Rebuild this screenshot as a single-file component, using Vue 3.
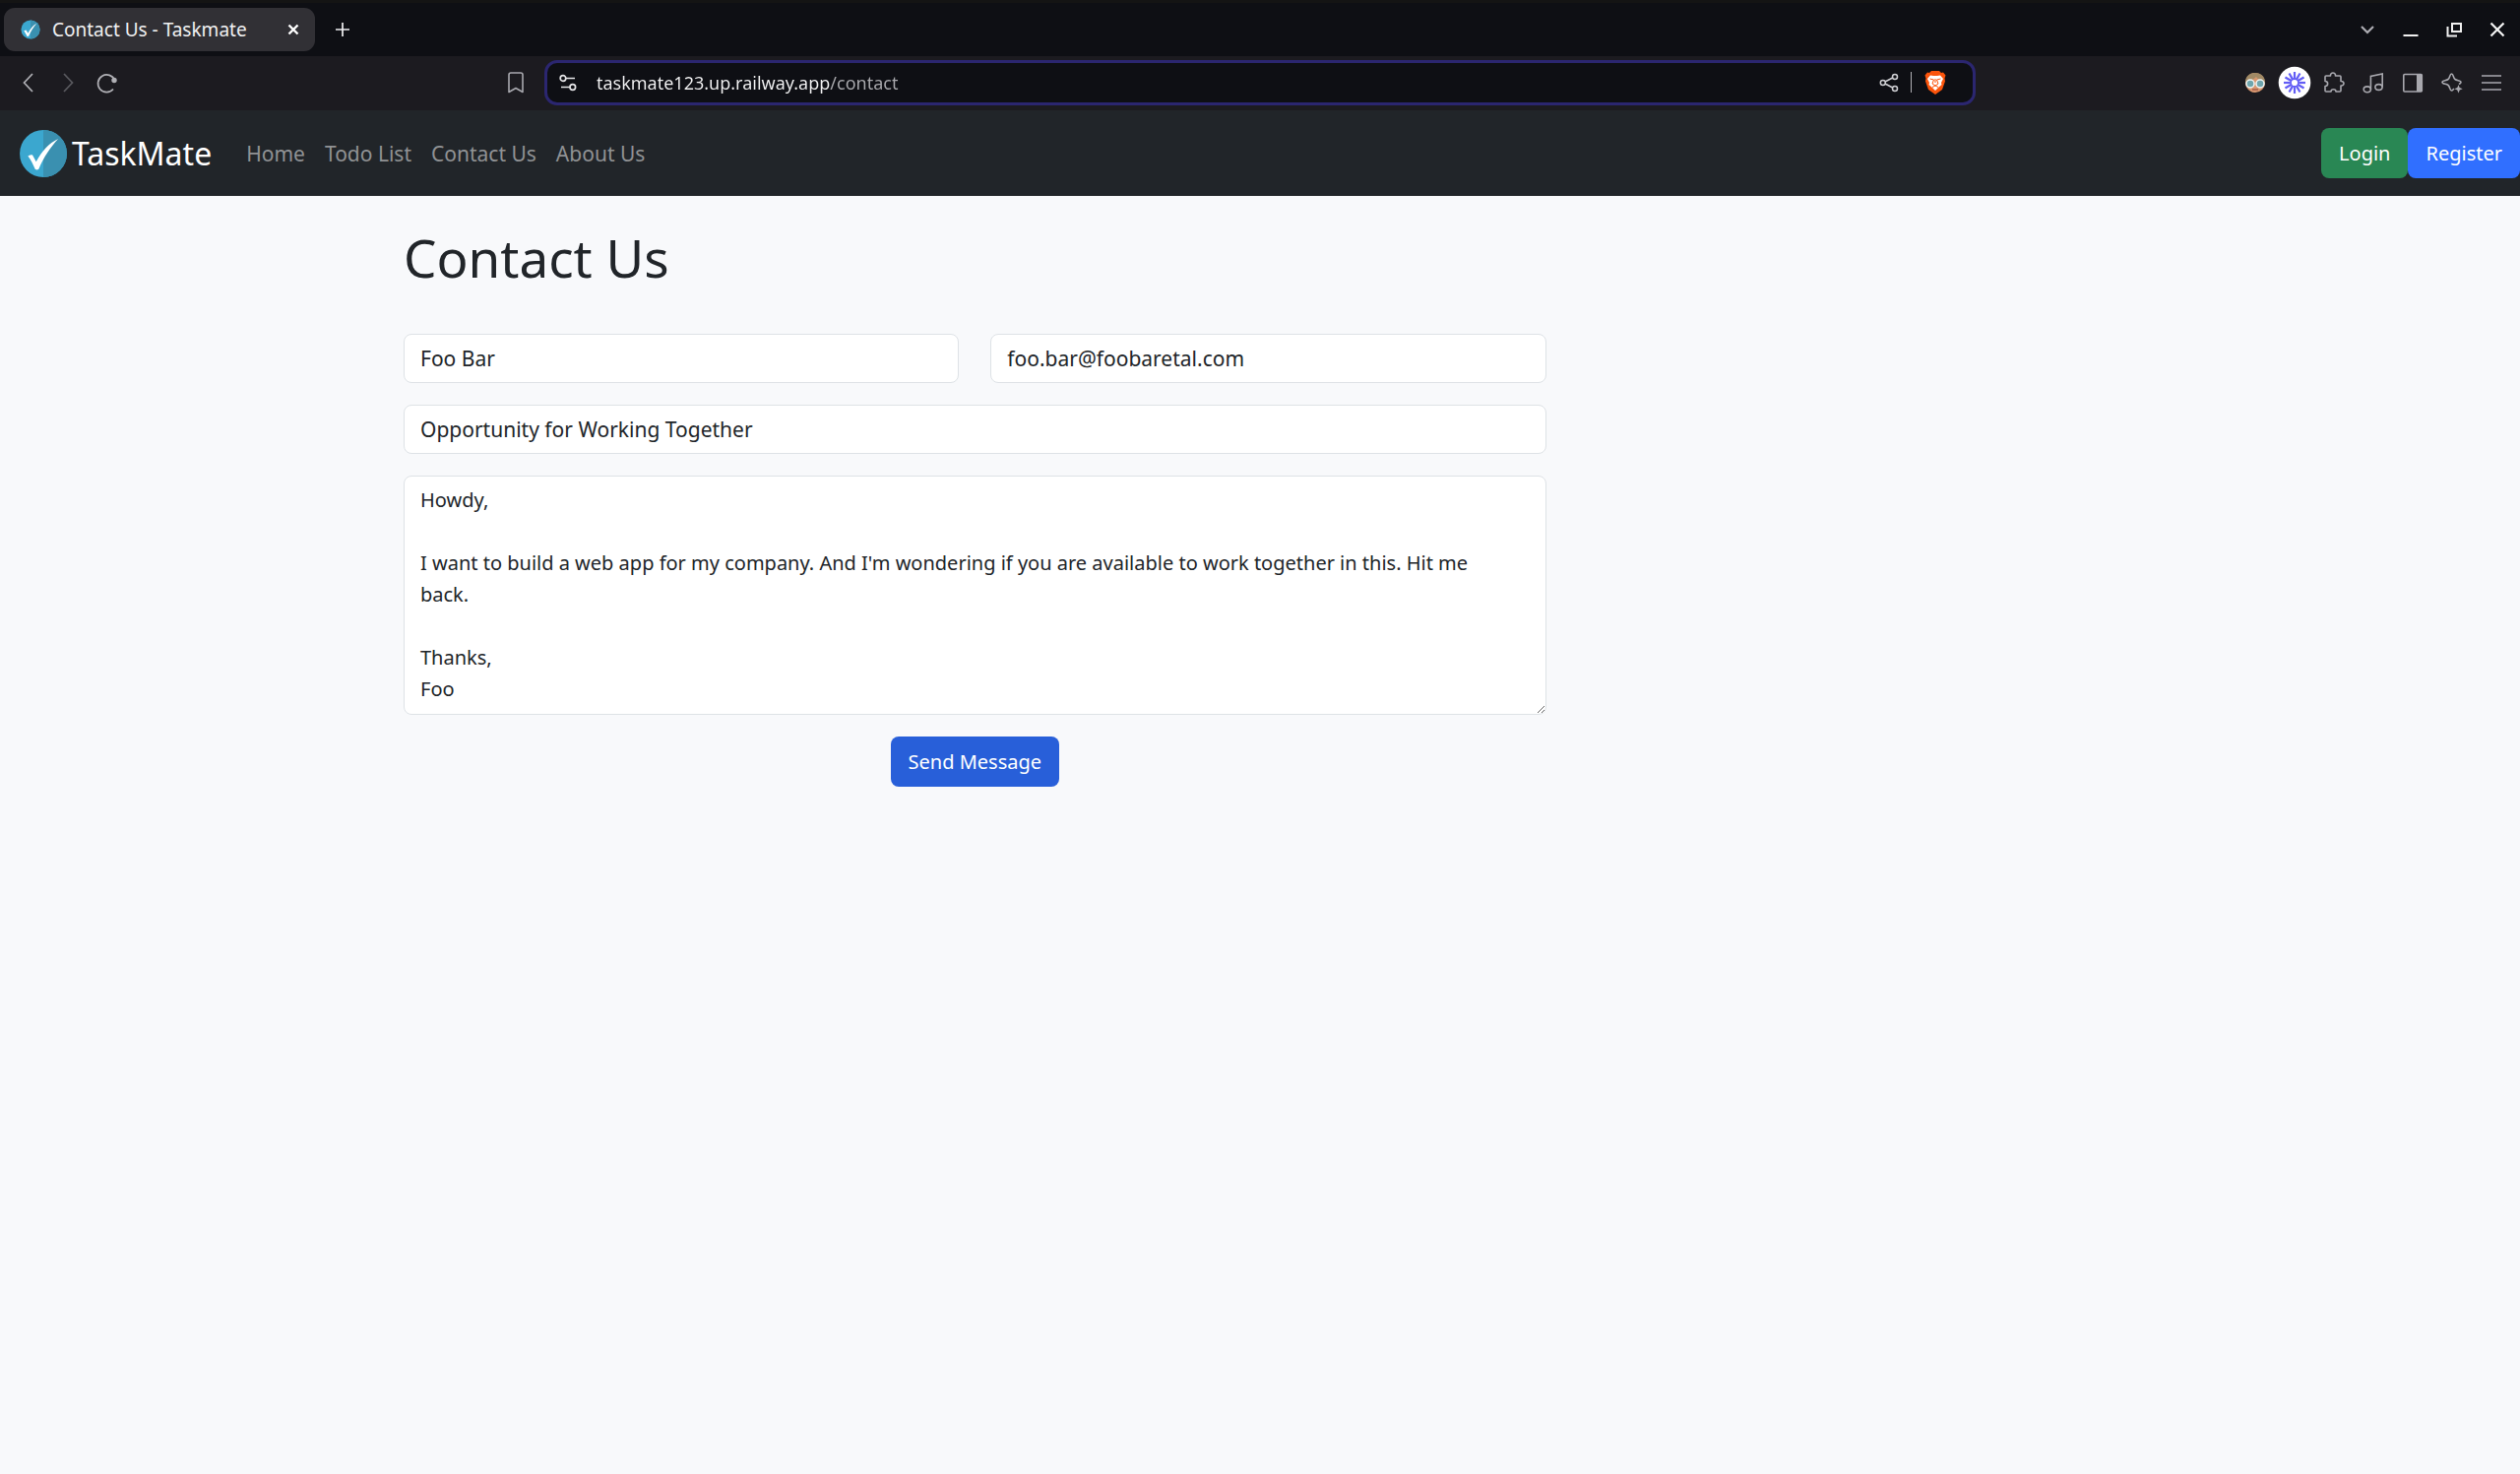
<script setup>
import { ref } from 'vue'

const url = ref('taskmate123.up.railway.app/contact')
const name = ref('Foo Bar')
const email = ref('foo.bar@foobaretal.com')
const subject = ref('Opportunity for Working Together')
const message = ref(
  "Howdy,\n\nI want to build a web app for my company. And I'm wondering if you are available to work together in this. Hit me back.\n\nThanks,\nFoo"
)
const links = ['Home', 'Todo List', 'Contact Us', 'About Us']
const rays = Array.from({ length: 12 }, (_, i) => i * 30)
</script>

<template>
  <div class="window">
    <div class="tabstrip">
      <div class="tab">
        <svg class="favicon" width="20" height="20" viewBox="0 0 48 48" aria-hidden="true">
          <circle cx="24" cy="24" r="23" fill="#3ba7cf" />
          <path d="M24 1a23 23 0 0 1 0 46z" fill="#3a90b0" />
          <path d="M8 27l5-2 5 8C24 22 30 14 39 9 31 18 25 28 19 41h-3z" fill="#fff" />
        </svg>
        <span class="tab-title">Contact Us - Taskmate</span>
        <button class="tab-close" aria-label="Close tab">
          <svg width="12" height="12" viewBox="0 0 12 12"><path d="M1.5 1.5l9 9m0-9l-9 9" stroke="#fff" stroke-width="2.4" /></svg>
        </button>
      </div>
      <button class="new-tab" aria-label="New tab">
        <svg width="16" height="16" viewBox="0 0 16 16"><path d="M8 1v14M1 8h14" stroke="#f0f0f2" stroke-width="1.7" /></svg>
      </button>
      <div class="window-controls">
        <button aria-label="Search tabs">
          <svg width="16" height="16" viewBox="0 0 16 16"><path d="M2 5l6 6 6-6" fill="none" stroke="#aeaeb4" stroke-width="2.2" /></svg>
        </button>
        <button aria-label="Minimize">
          <svg width="16" height="16" viewBox="0 0 16 16"><path d="M.5 14h15" stroke="#f0f0f0" stroke-width="2" /></svg>
        </button>
        <button aria-label="Restore">
          <svg width="16" height="16" viewBox="0 0 16 16" fill="none" stroke="#f0f0f0" stroke-width="2"><path d="M6 2h9v8H6zM1.5 5v9.5H11" /></svg>
        </button>
        <button aria-label="Close window">
          <svg width="16" height="16" viewBox="0 0 16 16"><path d="M1.5 1.5l13 13m0-13l-13 13" stroke="#f5f5f5" stroke-width="2.2" /></svg>
        </button>
      </div>
    </div>

    <div class="toolbar">
      <div class="tools">
        <button aria-label="Back">
          <svg width="20" height="20" viewBox="0 0 20 20"><path d="M14 1l-8.5 9 8.5 9" fill="none" stroke="#b0b0b5" stroke-width="1.7" /></svg>
        </button>
        <button aria-label="Forward">
          <svg width="20" height="20" viewBox="0 0 20 20"><path d="M6 1l8.5 9L6 19" fill="none" stroke="#5a5a5f" stroke-width="1.7" /></svg>
        </button>
        <button aria-label="Reload">
          <svg width="22" height="22" viewBox="0 0 22 22"><path d="M17 17.500a8.800 8.800 0 1 1 1.500-9" fill="none" stroke="#b0b0b5" stroke-width="1.7" /><circle cx="18" cy="8.5" r="2.7" fill="#b0b0b5" /></svg>
        </button>
        <button class="bookmark" aria-label="Bookmark">
          <svg width="16" height="22" viewBox="0 0 16 22"><path d="M1 3a2 2 0 0 1 2-2h10a2 2 0 0 1 2 2v17.5l-7-4-7 4z" fill="none" stroke="#a8a8ae" stroke-width="1.6" stroke-linejoin="round" /></svg>
        </button>
      </div>

      <div class="address">
        <svg width="18" height="18" viewBox="0 0 18 18" fill="none" stroke="#e6e6e8" stroke-width="1.7" aria-hidden="true">
          <circle cx="4" cy="4.5" r="2.8" /><path d="M7 4.5h9M2 13.5h9" /><circle cx="13.8" cy="13.5" r="2.8" />
        </svg>
        <input v-model="url" class="url" type="text" aria-label="Address" />
        <button class="share" aria-label="Share">
          <svg width="20" height="20" viewBox="0 0 20 20" fill="none" stroke="#d0d0d4" stroke-width="1.5">
            <circle cx="3.8" cy="10" r="2.5" /><circle cx="16" cy="4" r="2.5" /><circle cx="16" cy="16" r="2.5" /><path d="M6 9l7.7-4M6 11l7.7 4" />
          </svg>
        </button>
        <button class="shield" aria-label="Shields">
          <svg width="22" height="26" viewBox="0 0 22 26">
            <path d="M7 1h8l2 2 2-.5 2.500 3-1 3 .5 3-3 8.500L11 25l-7-5L1 11.500l.5-3-1-3L3 2.500 5 3z" fill="#fb540b" />
            <path d="M6 5.500l3 .5h4l3-.5 3 3.500-2 4 .5 2-3.500 3-3 3-3-3L4.500 15l.5-2-2-4z" fill="#fff" />
            <path d="M5.500 9l4 1-1.500 4L11 16l3-2-1.500-4 4-1M11 9v4M8 17.500l3-1.500 3 1.500" fill="none" stroke="#fb540b" stroke-width="1" />
          </svg>
        </button>
      </div>

      <div class="tools tools-right">
        <button aria-label="Profile">
          <svg width="22" height="22" viewBox="0 0 22 22">
            <circle cx="11" cy="11" r="10" fill="#d99870" />
            <path d="M1 10.500C1 5 5 1 11 1s10 4 10 9.500C17 9 14 8 12 5c-3 3-7 5-11 5.500z" fill="#a18a65" />
            <circle cx="6" cy="12" r="4" fill="#6fa5ad" stroke="#f1f6f6" stroke-width="1.5" /><circle cx="16" cy="12" r="4" fill="#6fa5ad" stroke="#f1f6f6" stroke-width="1.5" />
            <path d="M8 18h6" stroke="#a65d4b" stroke-width="1.5" />
          </svg>
        </button>
        <button aria-label="Loom">
          <svg width="34" height="34" viewBox="0 0 34 34">
            <circle cx="17" cy="17" r="16.3" fill="#fff" />
            <path v-for="r in rays" :key="r" d="M17 6v6.5" :transform="`rotate(${r} 17 17)`" stroke="#625df5" stroke-width="2.2" />
            <circle cx="17" cy="17" r="4" fill="none" stroke="#625df5" stroke-width="1.8" />
          </svg>
        </button>
        <button aria-label="Extensions">
          <svg width="22" height="22" viewBox="0 0 22 22"><path d="M3 4h4.500c-.5-4 5.500-4 5 0H17a1 1 0 0 1 1 1v4.500c4-.5 4 5 0 4.500V19a1 1 0 0 1-1 1h-4c0-3-5-3-5 0H3a1 1 0 0 1-1-1v-4.500c3.500 0 3.500-5 0-5V5a1 1 0 0 1 1-1z" fill="none" stroke="#a8a8ae" stroke-width="1.6" stroke-linejoin="round" /></svg>
        </button>
        <button aria-label="Media">
          <svg width="22" height="22" viewBox="0 0 22 22" fill="none" stroke="#a8a8ae" stroke-width="1.6"><ellipse cx="4.8" cy="17.8" rx="3.6" ry="2.9" /><ellipse cx="16.5" cy="15.5" rx="3.6" ry="2.9" /><path d="M8.400 18V4.500L20.200 2v13.500" /></svg>
        </button>
        <button aria-label="Sidebar">
          <svg width="22" height="22" viewBox="0 0 22 22"><rect x="1.8" y="2.5" width="18.5" height="17.5" rx="1" fill="none" stroke="#a8a8ae" stroke-width="1.6" /><path d="M15 2.500h5.500v17.500H15z" fill="#a8a8ae" /></svg>
        </button>
        <button aria-label="Assistant">
          <svg width="22" height="22" viewBox="0 0 22 22"><path d="M13 17c-1 .8-1.500 2-2.500 2-2 0-1.500-4-3.500-5.500S1 12.500 1 10.500 5 9 7 7.500 8.500 2 10.500 2 12 6 14 7.500s6 1 6 3c0 1-1 1.500-2 2" fill="none" stroke="#a8a8ae" stroke-width="1.6" /><path d="M17.500 13l1.200 3 3 1.200-3 1.200-1.200 3-1.200-3-3-1.200 3-1.200z" fill="#a8a8ae" /></svg>
        </button>
        <button aria-label="Menu">
          <svg width="22" height="22" viewBox="0 0 22 22"><path d="M1 4h20M1 11h20M1 18h20" stroke="#a8a8ae" stroke-width="1.7" /></svg>
        </button>
      </div>
    </div>

    <nav class="navbar">
      <a class="brand" href="#">
        <svg width="50" height="50" viewBox="0 0 48 48" aria-hidden="true">
          <circle cx="24" cy="24" r="23" fill="#3ba7cf" />
          <path d="M24 1a23 23 0 0 1 0 46z" fill="#3a90b0" />
          <path d="M9 26.500c1-1 3-2 4.500-1L17 32C23 21 29 14 38.500 9.500 31 18 24.500 27 19.500 39c-1 1-2.500 1-3.500 0-2-4-4-9-7-12.500z" fill="#fff" />
        </svg>
        <span>TaskMate</span>
      </a>
      <a v-for="link in links" :key="link" class="nav-link" href="#">{{ link }}</a>
      <div class="account">
        <button class="btn btn-login">Login</button>
        <button class="btn btn-register">Register</button>
      </div>
    </nav>

    <main class="container">
      <h1>Contact Us</h1>
      <form @submit.prevent>
        <div class="row">
          <input v-model="name" class="field" type="text" aria-label="Name" />
          <input v-model="email" class="field" type="email" aria-label="Email" />
        </div>
        <input v-model="subject" class="field" type="text" aria-label="Subject" />
        <textarea v-model="message" class="field" rows="7" aria-label="Message" spellcheck="false"></textarea>
        <button class="btn btn-send" type="submit">Send Message</button>
      </form>
    </main>
  </div>
</template>

<style>
body {
  background: #f8f9fb;
}
</style>

<style scoped>
.window {
  font-family: "Noto Sans", sans-serif;
  font-size: 21px;
  line-height: 32px;
  color: #212529;
}
button,
input,
textarea {
  font: inherit;
  box-sizing: border-box;
}
button {
  border: 0;
  padding: 0;
  background: none;
  color: inherit;
}
svg {
  display: block;
  flex: none;
}

.tabstrip {
  display: flex;
  align-items: center;
  box-sizing: border-box;
  height: 57px;
  padding: 3px 1px 0 4px;
  background: linear-gradient(#141414 3px, #0e0f14 3px);
  color: #f0f0f2;
}
.tab {
  display: flex;
  align-items: center;
  box-sizing: border-box;
  width: 316px;
  height: 44px;
  padding: 0 16px 0 17px;
  border-radius: 11px;
  background: #313035;
}
.tab-title {
  flex: 1;
  margin-left: 12px;
  font-size: 19px;
  white-space: nowrap;
}
.new-tab {
  display: flex;
  margin-left: 20px;
}
.window-controls {
  display: flex;
  margin-left: auto;
}
.window-controls button {
  display: flex;
  justify-content: center;
  width: 44px;
}

.toolbar {
  display: grid;
  grid-template-columns: 1fr 56.8% 1fr;
  align-items: center;
  box-sizing: border-box;
  height: 55px;
  padding-bottom: 2px;
  background: #1c1b20;
}
.tools {
  display: flex;
  align-items: center;
  padding: 0 9px;
}
.tools button {
  display: flex;
  align-items: center;
  justify-content: center;
  width: 40px;
  height: 40px;
}
.tools .bookmark {
  margin-left: auto;
}
.tools-right {
  justify-content: flex-end;
}
.address {
  display: flex;
  align-items: center;
  box-sizing: border-box;
  height: 46px;
  padding: 0 27px 0 12px;
  border: 3px solid #2b2670;
  border-radius: 13px;
  background: #0e0f14;
}
.url {
  flex: 1;
  min-width: 0;
  margin: 0 20px;
  padding: 0;
  border: 0;
  outline: 0;
  font-size: 18px;
  color: #f4f4f5;
  background: linear-gradient(90deg, #f4f4f5 237px, #aaaaae 237px);
  background-clip: text;
  -webkit-background-clip: text;
  -webkit-text-fill-color: transparent;
}
.share {
  padding-right: 12px;
}
.shield {
  padding-left: 14px;
  background: linear-gradient(#b0b0b4, #b0b0b4) left center / 1px 21px no-repeat;
}

.navbar {
  display: flex;
  align-items: center;
  height: 87px;
  padding-left: 19px;
  background: #212529;
}
.brand {
  display: flex;
  align-items: center;
  gap: 4px;
  margin-right: 25px;
  color: #fff;
  font-size: 32px;
  text-decoration: none;
}
.nav-link {
  padding: 0 10px;
  color: #909294;
  text-decoration: none;
}
.account {
  display: flex;
  margin-left: auto;
}
.btn {
  height: 51px;
  padding: 0 18px;
  border-radius: 8px;
  color: #fff;
  font-size: 20px;
}
.btn-login {
  background: #298754;
}
.btn-register {
  background: #306fff;
}
.btn-send {
  align-self: center;
  background: #285fd9;
}

.container {
  max-width: 1740px;
  margin: 0 auto;
  padding: 31px 20px 0;
}
h1 {
  margin: 0 0 45px;
  font-size: 53px;
  font-weight: 400;
  line-height: 64px;
}
form {
  display: flex;
  flex-direction: column;
  gap: 22px;
  width: 66.7%;
}
.row {
  display: grid;
  grid-template-columns: 1fr 1fr;
  gap: 32px;
}
.field {
  width: 100%;
  min-width: 0;
  padding: 8px 16px;
  border: 1px solid #dee2e6;
  border-radius: 8px;
  outline: 0;
  background: #fff;
  color: #212529;
}
textarea.field {
  display: block;
  padding: 8px 48px 9px 16px;
  font-size: 20px;
  resize: both;
}
</style>
